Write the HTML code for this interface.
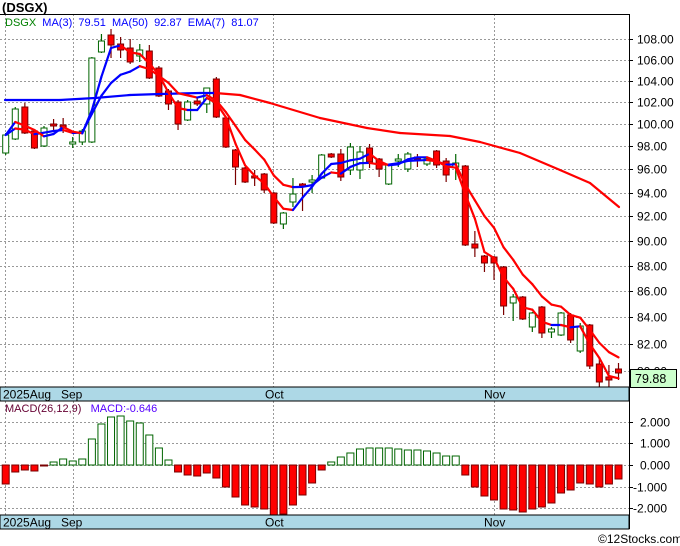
<!DOCTYPE html>
<html><head><meta charset="utf-8"><style>
body{margin:0;background:#fff;width:680px;height:546px;overflow:hidden}
svg{display:block}
text{font-family:"Liberation Sans","DejaVu Sans",sans-serif}
</style></head><body>
<svg id="s" width="680" height="546" xmlns="http://www.w3.org/2000/svg"></svg>
<script>
const S=document.getElementById('s');const NS='http://www.w3.org/2000/svg';
function el(t,a,txt){const e=document.createElementNS(NS,t);for(const k in a)e.setAttribute(k,a[k]);if(txt!==undefined)e.textContent=txt;S.appendChild(e);return e;}
const Y=p=>39+1106*Math.log(108/p);
// grid top
const pl=[108,106,104,102,100,98,96,94,92,90,88,86,84,82,80];
pl.forEach(p=>{const y=Math.round(Y(p))+.5;el('line',{x1:0,x2:629,y1:y,y2:y,stroke:'#999','stroke-dasharray':'2,2','stroke-width':1});
el('line',{x1:629,x2:633,y1:y,y2:y,stroke:'#000'});
el('text',{x:637,y:y+4,'font-size':12,fill:'#000'},p.toFixed(2));});
[5.5,73.5,273.5,494.5].forEach(x=>{el('line',{x1:x,x2:x,y1:14,y2:387,stroke:'#999','stroke-dasharray':'2,2'});el('line',{x1:x,x2:x,y1:401,y2:515,stroke:'#999','stroke-dasharray':'2,2'});});
// macd grid
[[2,422],[1,443],[0,465],[-1,487],[-2,508]].forEach(([v,y])=>{y+=.5;el('line',{x1:0,x2:629,y1:y,y2:y,stroke:'#999','stroke-dasharray':'2,2'});el('line',{x1:629,x2:633,y1:y,y2:y,stroke:'#000'});
el('text',{x:v<0?633:640,y:y+4,'font-size':12,fill:'#000'},v.toFixed(3));});
// candles [color, bodyTop, bodyBot, wickTop, wickBot]
const C=[['g',135,153,133,155],['g',109,139,107,140],['r',107,133,103,134],['r',131,148,129,149],['g',128,146,126,147],['r',124,126,119,131],['r',125,127,118,133],['g',142,144,137,148],['g',131,142,129,145],['g',58,142,57,143],
['g',41,52,34,53],['r',35,45,29,58],['r',44,50,37,58],['r',48,62,39,64],['g',50,56,44,62],['r',51,78,45,79],['r',68,96,66,97],['r',91,104,89,110],['r',102,124,100,130],['g',102,120,100,121],
['r',101,104,98,106],['g',88,104,88,113],['r',79,117,77,118],['r',118,147,117,148],['r',150,167,149,185],['r',168,182,167,183],['r',176,178,170,186],['r',174,190,173,193],['r',193,223,192,224],['g',213,224,212,229],
['g',194,202,178,207],['r',184,186,183,211],['g',180,182,175,193],['g',155,178,154,179],['r',154,157,153,158],['r',154,177,149,181],['g',147,170,143,175],['g',152,170,146,179],['r',148,162,144,168],['r',159,169,158,177],
['g',165,184,164,185],['g',159,161,154,167],['g',154,169,152,172],['r',157,159,154,167],['g',159,164,157,166],['r',151,165,150,168],['r',161,175,158,182],['g',163,167,154,180],['r',166,245,165,246],['r',244,248,231,257],
['r',256,263,255,272],['r',257,263,256,280],['r',267,306,266,315],['g',297,303,294,321],['r',297,319,296,320],['g',313,327,312,332],['r',307,333,306,338],['g',329,332,327,338],['g',313,335,312,336],['r',315,340,313,343],
['g',326,351,323,353],['r',325,366,324,369],['r',364,382,358,388],['r',377,380,365,387],['r',369,373,363,380]];
const X=i=>5.7+9.575*i;
// MA50
const m50=[[5,100],[60,100],[95,98],[130,95],[160,94],[200,93],[215,93],[240,95],[270,103],[320,118],[367,128],[400,133],[450,136],[480,142],[520,153],[560,170],[590,183],[619,207]];
function seg(pts){for(let i=1;i<pts.length;i++){const [a,b]=[pts[i-1],pts[i]];el('line',{x1:a[0],y1:a[1],x2:b[0],y2:b[1],stroke:b[1]<=a[1]?'#0000ff':'#ff0000','stroke-width':2.2,'stroke-linecap':'round'});}}
// closes
const cl=C.map(c=>c[0]=='g'?c[1]:c[2]);
const ma3=[],ema=[];let e=cl[0];
cl.forEach((v,i)=>{const a=cl.slice(Math.max(0,i-2),i+1);ma3.push([X(i),a.reduce((s,x)=>s+x,0)/a.length]);e=i==0?v:e+(v-e)*0.25;ema.push([X(i),e]);});
// candles
C.forEach((c,i)=>{const x=X(i);const col=c[0]=='g'?'#006400':'#7a0000';
el('line',{x1:x,x2:x,y1:c[3],y2:c[4],stroke:col,'stroke-width':1.2});
const h=Math.max(c[2]-c[1],2);
el('rect',{x:x-3,y:c[1],width:6,height:h,fill:c[0]=='g'?'#fff':'#ff0000',stroke:col,'stroke-width':1});});
seg(m50);seg(ema);seg(ma3);
// macd
const M=[-19,-7,-5,-6,-1,3,6,4,6,26,41,48,49,44,42,30,17,5,-7,-10,-11,-8,-13,-22,-32,-40,-42,-44,-50,-49,-40,-30,-18,-5,3,8,12,16,17,17,17,16,15,15,14,12,9,9,-10,-22,-31,-35,-44,-45,-47,-44,-42,-38,-28,-25,-18,-19,-22,-19,-14];
M.forEach((v,i)=>{const x=X(i);const g=v>0;el('rect',{x:x-3.5,y:g?465-v:465,width:7,height:Math.max(Math.abs(v),1),fill:g?'#fff':'#ff0000',stroke:g?'#006400':'#7a0000','stroke-width':1});});
// panels
el('rect',{x:0,y:387,width:629,height:14,fill:'#add8e6',stroke:'#000','stroke-width':1});
el('rect',{x:0,y:515,width:629,height:14,fill:'#add8e6',stroke:'#000','stroke-width':1});
el('line',{x1:0,x2:629,y1:14.5,y2:14.5,stroke:'#000'});
el('line',{x1:629.5,x2:629.5,y1:14,y2:529,stroke:'#000'});
[['2025Aug',3],['Sep',61],['Oct',265],['Nov',484]].forEach(([t,x])=>{el('text',{x:x,y:398.5,'font-size':12,fill:'#000'},t);el('text',{x:x,y:526.5,'font-size':12,fill:'#000'},t);});
// price tag
el('rect',{x:630.5,y:369.5,width:46,height:18,fill:'#ccffcc',stroke:'#000'});
el('text',{x:635,y:383,'font-size':12.5,fill:'#000'},'79.88');
// titles
el('text',{x:2,y:12,'font-size':13,'font-weight':'bold',fill:'#000'},'(DSGX)');
const t=el('text',{x:5,y:26,'font-size':11,fill:'#0000ff'});
t.innerHTML='<tspan fill="#008000">DSGX</tspan>  MA(3)  79.51  MA(50)  92.87  EMA(7)  81.07';t.setAttribute('xml:space','preserve');t.style.whiteSpace='pre';
const t2=el('text',{x:5,y:412,'font-size':11,fill:'#5500ff'});t2.style.whiteSpace='pre';
t2.innerHTML='<tspan fill="#660033">MACD(26,12,9)</tspan>   MACD:-0.646';
el('text',{x:598,y:543,'font-size':12,fill:'#000'},'©12Stocks.com');
</script>
</body></html>
